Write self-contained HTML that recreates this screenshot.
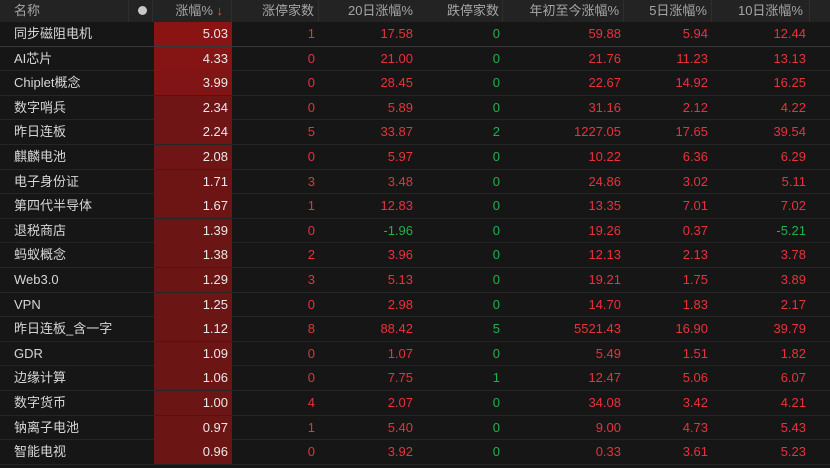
<!DOCTYPE html>
<html><head><meta charset="utf-8"><style>
*{margin:0;padding:0;box-sizing:border-box}
body{width:830px;height:468px;background:#161616;overflow:hidden;font-family:"Liberation Sans","Noto Sans CJK SC",sans-serif;font-size:13px;position:relative}
.hd{position:absolute;left:0;top:0;width:830px;height:22px;background:#232323;color:#a6a6a6}
.hd span{position:absolute;top:0;height:22px;line-height:22px;white-space:nowrap}
.sep{position:absolute;top:0;width:1px;height:22px;background:#2e2e2e}
.row{position:absolute;left:0;width:830px;height:24.6px;border-bottom:1px solid #262626}
.row span{position:absolute;top:0;height:24px;line-height:24px;white-space:nowrap}
.nm{left:14px;color:#d6d6d6}
.bar{position:absolute;left:154px;width:78px;top:0;height:24px}
.r{color:#e8323c}.g{color:#23b04a}.w{color:#e8e8e8}
</style></head><body>
<div class="hd">
<span style="left:14px">名称</span>
<div class="sep" style="left:128px"></div>
<div style="position:absolute;left:138px;top:6px;width:9px;height:9px;border-radius:50%;background:#c8c8c8"></div>
<div class="sep" style="left:152px"></div>
<span style="right:607px">涨幅% <span style="position:static;color:#e8503a">↓</span></span>
<div class="sep" style="left:231px"></div>
<span style="right:516px">涨停家数</span>
<div class="sep" style="left:318px"></div>
<span style="right:417px">20日涨幅%</span>
<div class="sep" style="left:502px"></div>
<span style="right:331px">跌停家数</span>
<div class="sep" style="left:623px"></div>
<span style="right:211px">年初至今涨幅%</span>
<div class="sep" style="left:711px"></div>
<span style="right:123px">5日涨幅%</span>
<div class="sep" style="left:809px"></div>
<span style="right:27px">10日涨幅%</span>
</div>
<div id="rows"></div>
<script>
var d=[["同步磁阻电机","5.03","1","17.58","0","59.88","5.94","12.44","#8a1414"],
["AI芯片","4.33","0","21.00","0","21.76","11.23","13.13","#851414"],
["Chiplet概念","3.99","0","28.45","0","22.67","14.92","16.25","#811515"],
["数字哨兵","2.34","0","5.89","0","31.16","2.12","4.22","#701515"],
["昨日连板","2.24","5","33.87","2","1227.05","17.65","39.54","#6f1515"],
["麒麟电池","2.08","0","5.97","0","10.22","6.36","6.29","#6f1515"],
["电子身份证","1.71","3","3.48","0","24.86","3.02","5.11","#6d1515"],
["第四代半导体","1.67","1","12.83","0","13.35","7.01","7.02","#6d1515"],
["退税商店","1.39","0","-1.96","0","19.26","0.37","-5.21","#6c1515"],
["蚂蚁概念","1.38","2","3.96","0","12.13","2.13","3.78","#6c1515"],
["Web3.0","1.29","3","5.13","0","19.21","1.75","3.89","#6c1515"],
["VPN","1.25","0","2.98","0","14.70","1.83","2.17","#6c1515"],
["昨日连板_含一字","1.12","8","88.42","5","5521.43","16.90","39.79","#6c1515"],
["GDR","1.09","0","1.07","0","5.49","1.51","1.82","#6c1515"],
["边缘计算","1.06","0","7.75","1","12.47","5.06","6.07","#6c1515"],
["数字货币","1.00","4","2.07","0","34.08","3.42","4.21","#6c1515"],
["钠离子电池","0.97","1","5.40","0","9.00","4.73","5.43","#6c1515"],
["智能电视","0.96","0","3.92","0","0.33","3.61","5.23","#6c1515"]];
var h="";
d.forEach(function(r,i){
var top=22+i*24.6;
var c=function(v){return v.charAt(0)=="-"?"g":"r"};
h+='<div class="row" style="top:'+top+'px'+(i==0?';border-bottom-color:#3a3a3a':'')+'">'+
'<div class="bar" style="background:'+r[8]+'"></div>'+
'<span class="nm">'+r[0]+'</span>'+
'<span class="w" style="right:602px">'+r[1]+'</span>'+
'<span class="r" style="right:515px">'+r[2]+'</span>'+
'<span class="'+c(r[3])+'" style="right:417px">'+r[3]+'</span>'+
'<span class="g" style="right:330px">'+r[4]+'</span>'+
'<span class="r" style="right:209px">'+r[5]+'</span>'+
'<span class="r" style="right:122px">'+r[6]+'</span>'+
'<span class="'+c(r[7])+'" style="right:24px">'+r[7]+'</span></div>';
});
document.getElementById("rows").innerHTML=h;
</script>
</body></html>
